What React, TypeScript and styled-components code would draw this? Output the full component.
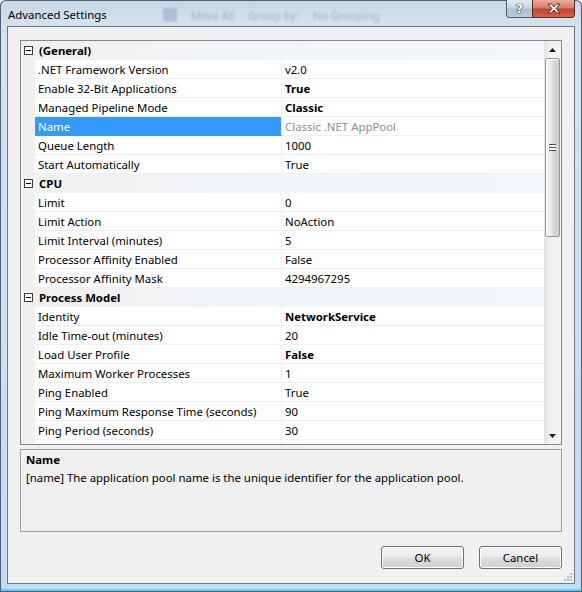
import React from 'react';
import styled, { createGlobalStyle, css } from 'styled-components';

type Item = {
  name: string;
  value: string;
  bold?: boolean;
  selected?: boolean;
  readOnly?: boolean;
};

type Section = {
  title: string;
  items: Item[];
};

const sections: Section[] = [
  {
    title: '(General)',
    items: [
      { name: '.NET Framework Version', value: 'v2.0' },
      { name: 'Enable 32-Bit Applications', value: 'True', bold: true },
      { name: 'Managed Pipeline Mode', value: 'Classic', bold: true },
      { name: 'Name', value: 'Classic .NET AppPool', selected: true, readOnly: true },
      { name: 'Queue Length', value: '1000' },
      { name: 'Start Automatically', value: 'True' },
    ],
  },
  {
    title: 'CPU',
    items: [
      { name: 'Limit', value: '0' },
      { name: 'Limit Action', value: 'NoAction' },
      { name: 'Limit Interval (minutes)', value: '5' },
      { name: 'Processor Affinity Enabled', value: 'False' },
      { name: 'Processor Affinity Mask', value: '4294967295' },
    ],
  },
  {
    title: 'Process Model',
    items: [
      { name: 'Identity', value: 'NetworkService', bold: true },
      { name: 'Idle Time-out (minutes)', value: '20' },
      { name: 'Load User Profile', value: 'False', bold: true },
      { name: 'Maximum Worker Processes', value: '1' },
      { name: 'Ping Enabled', value: 'True' },
      { name: 'Ping Maximum Response Time (seconds)', value: '90' },
      { name: 'Ping Period (seconds)', value: '30' },
      { name: '', value: '' },
    ],
  },
];

function CollapseBox() {
  return (
    <svg width="9" height="9" viewBox="0 0 9 9">
      <rect x="0.5" y="0.5" width="8" height="8" fill="#ffffff" stroke="#3c3c3c" />
      <line x1="2" y1="4.5" x2="7" y2="4.5" stroke="#000000" />
    </svg>
  );
}

function Arrow({ up }: { up?: boolean }) {
  return (
    <svg width="7" height="4" viewBox="0 0 7 4">
      <path d={up ? 'M0 4 L3.5 0 L7 4 Z' : 'M0 0 L3.5 4 L7 0 Z'} fill="#1e1e1e" />
    </svg>
  );
}

function CloseGlyph() {
  return (
    <svg width="14" height="11" viewBox="0 0 14 11">
      <path
        d="M1 1 H4.5 L7 4 L9.5 1 H13 L9 5.5 L13 10 H9.5 L7 7 L4.5 10 H1 L5 5.5 Z"
        fill="#ffffff"
        stroke="#5a2018"
        strokeWidth="0.9"
        strokeLinejoin="round"
      />
    </svg>
  );
}

function Grip() {
  const dots = [
    [6, 0],
    [3, 3],
    [6, 3],
    [0, 6],
    [3, 6],
    [6, 6],
  ];
  return (
    <svg width="8" height="8" viewBox="0 0 8 8">
      {dots.map(([x, y]) => (
        <rect key={`${x}-${y}`} x={x} y={y} width="2" height="2" fill="#b8b8b8" />
      ))}
    </svg>
  );
}

export default function App() {
  return (
    <>
      <GlobalStyle />
      <Window>
        <TitleBar>
          <Caption>Advanced Settings</Caption>
          <Backdrop aria-hidden>
            <BlurIcon />
            <BlurText>Move All</BlurText>
            <BlurText>Group by:</BlurText>
            <BlurText>No Grouping</BlurText>
          </Backdrop>
          <CaptionButtons>
            <HelpButton>?</HelpButton>
            <CloseButton>
              <CloseGlyph />
            </CloseButton>
          </CaptionButtons>
        </TitleBar>

        <Client>
          <PropertyGrid>
            <Rows>
              {sections.map((section) => (
                <React.Fragment key={section.title}>
                  <CategoryRow>
                    <Gutter>
                      <CollapseBox />
                    </Gutter>
                    <CategoryTitle>{section.title}</CategoryTitle>
                  </CategoryRow>
                  {section.items.map((item, i) => (
                    <PropRow key={`${section.title}-${i}`}>
                      <Gutter />
                      <NameCell $selected={item.selected}>{item.name}</NameCell>
                      <ValueCell $bold={item.bold} $readOnly={item.readOnly}>
                        {item.value}
                      </ValueCell>
                    </PropRow>
                  ))}
                </React.Fragment>
              ))}
            </Rows>
            <ScrollBar>
              <ScrollButton>
                <Arrow up />
              </ScrollButton>
              <Thumb>
                <GripLines />
              </Thumb>
              <Track />
              <ScrollButton>
                <Arrow />
              </ScrollButton>
            </ScrollBar>
          </PropertyGrid>

          <Description>
            <DescTitle>Name</DescTitle>
            <DescText>
              [name] The application pool name is the unique identifier for the application pool.
            </DescText>
          </Description>

          <ButtonRow>
            <DialogButton>OK</DialogButton>
            <DialogButton>Cancel</DialogButton>
          </ButtonRow>

          <SizeGrip>
            <Grip />
          </SizeGrip>
        </Client>
      </Window>
    </>
  );
}

const GlobalStyle = createGlobalStyle`
  html, body {
    margin: 0;
    padding: 0;
    background: #ffffff;
  }
  body {
    font-family: "Noto Sans", "Open Sans", sans-serif;
    font-size: 11.4px;
    color: #000000;
  }
  * {
    box-sizing: border-box;
  }
`;

const Window = styled.div`
  display: flex;
  flex-direction: column;
  width: 582px;
  height: 592px;
  border-radius: 6px 6px 0 0;
  background: linear-gradient(to bottom, #c6d6e7 0%, #d6e2ee 26px, #cddff1 60%, #c4dbf1 100%);
  box-shadow: inset 0 0 0 1px #4e6078, inset 0 -2px 0 1px #5fd0f6;
  overflow: hidden;
`;

const TitleBar = styled.div`
  display: flex;
  align-items: flex-start;
  height: 26px;
  padding-left: 8px;
`;

const Caption = styled.div`
  padding-top: 6px;
  line-height: 18px;
  color: #000000;
  white-space: nowrap;
`;

const Backdrop = styled.div`
  display: flex;
  align-items: center;
  flex: 1;
  gap: 14px;
  height: 26px;
  padding: 4px 0 0 56px;
  opacity: 0.28;
  filter: blur(1.3px);
`;

const BlurIcon = styled.span`
  width: 14px;
  height: 14px;
  border-radius: 3px;
  background: #4d78a8;
`;

const BlurText = styled.span`
  color: #2a3f5a;
  font-size: 11px;
  white-space: nowrap;
`;

const CaptionButtons = styled.div`
  display: flex;
  margin-right: 7px;
`;

const captionBase = css`
  display: flex;
  align-items: center;
  justify-content: center;
  height: 18px;
  border: 1px solid #4f5f74;
  border-top: none;
`;

const HelpButton = styled.div`
  ${captionBase}
  width: 26px;
  border-right: none;
  border-radius: 0 0 0 4px;
  background: linear-gradient(to bottom, #e2eaf2 0%, #c9d6e3 45%, #aebfd1 55%, #b9cde0 100%);
  color: #ffffff;
  font-family: "DejaVu Sans", sans-serif;
  font-size: 13px;
  font-weight: bold;
  line-height: 16px;
  text-shadow: 0 0 1px #1d2b3c, 0 0 1px #1d2b3c, 0 0 1px #1d2b3c;
`;

const CloseButton = styled.div`
  ${captionBase}
  width: 43px;
  border-radius: 0 0 4px 0;
  background: linear-gradient(to bottom, #e8aea3 0%, #d77d6b 45%, #c5432d 55%, #d2664d 100%);
  border-color: #5a2a22;
`;

const Client = styled.div`
  position: relative;
  display: flex;
  flex-direction: column;
  flex: 1;
  margin: 0 7px 8px;
  padding: 13px 12px 14px;
  border: 1px solid #6a7888;
  background: #f0f0f0;
`;

const PropertyGrid = styled.div`
  display: flex;
  height: 405px;
  border: 1px solid #828790;
  background: #ffffff;
`;

const Rows = styled.div`
  display: flex;
  flex-direction: column;
  flex: 1;
  overflow: hidden;
`;

const rowBase = css`
  display: grid;
  flex-shrink: 0;
  height: 19px;
  line-height: 19px;
  white-space: nowrap;
`;

const CategoryRow = styled.div`
  ${rowBase}
  grid-template-columns: 14px 1fr;
  background: linear-gradient(to right, #f0f0f0 0%, #f1f4f8 40%, #f3f6fb 100%);
`;

const PropRow = styled.div`
  ${rowBase}
  grid-template-columns: 14px 247px 1fr;
`;

const Gutter = styled.div`
  display: flex;
  align-items: center;
  padding-left: 3px;
  background: #f0f0f0;
`;

const CategoryTitle = styled.div`
  padding-left: 4px;
  line-height: 19px;
  font-weight: bold;
`;

const NameCell = styled.div<{ $selected?: boolean }>`
  padding: 1px 0 0 3px;
  border-right: 1px solid #eef0f4;
  border-bottom: 1px solid #eef0f4;
  line-height: 18px;
  overflow: hidden;
  ${({ $selected }) =>
    $selected &&
    css`
      background: #3399ff;
      border-bottom-color: #3399ff;
      color: #ffffff;
    `}
`;

const ValueCell = styled.div<{ $bold?: boolean; $readOnly?: boolean }>`
  padding: 1px 0 0 3px;
  border-bottom: 1px solid #eef0f4;
  line-height: 18px;
  overflow: hidden;
  font-weight: ${({ $bold }) => ($bold ? 'bold' : 'normal')};
  color: ${({ $readOnly }) => ($readOnly ? '#8d8d8d' : '#000000')};
`;

const ScrollBar = styled.div`
  display: flex;
  flex-direction: column;
  width: 17px;
  background: linear-gradient(to right, #e3e3e3 0%, #f0f0f0 30%, #f4f4f4 100%);
`;

const ScrollButton = styled.div`
  display: flex;
  align-items: center;
  justify-content: center;
  flex-shrink: 0;
  height: 17px;
`;

const Thumb = styled.div`
  display: flex;
  align-items: center;
  justify-content: center;
  flex-shrink: 0;
  height: 179px;
  margin: 0 1px;
  border: 1px solid #979797;
  border-radius: 2px;
  background: linear-gradient(to right, #f4f4f4 0%, #e8e8e8 45%, #d8d8d8 55%, #cdcdcd 100%);
  box-shadow: inset 1px 1px 0 #fbfbfb;
`;

const GripLines = styled.span`
  width: 7px;
  height: 7px;
  background: repeating-linear-gradient(
    to bottom,
    #4f4f4f 0,
    #4f4f4f 1px,
    #f4f4f4 1px,
    #f4f4f4 3px
  );
`;

const Track = styled.div`
  flex: 1;
`;

const Description = styled.div`
  height: 83px;
  margin-top: 4px;
  padding: 1px 5px;
  border: 1px solid #a0a0a0;
  background: #f0f0f0;
  line-height: 18px;
`;

const DescTitle = styled.div`
  font-weight: bold;
`;

const DescText = styled.div`
  color: #000000;
`;

const ButtonRow = styled.div`
  display: flex;
  justify-content: flex-end;
  gap: 15px;
  margin-top: 14px;
`;

const DialogButton = styled.button`
  width: 83px;
  height: 23px;
  padding: 0;
  border: 1px solid #707070;
  border-radius: 3px;
  background: linear-gradient(to bottom, #f2f2f2 0%, #ebebeb 49%, #dddddd 51%, #cfcfcf 100%);
  box-shadow: inset 0 0 0 1px #fbfbfb;
  font-family: inherit;
  font-size: 11.4px;
  color: #000000;
`;

const SizeGrip = styled.div`
  position: absolute;
  right: 2px;
  bottom: 2px;
  display: flex;
`;
